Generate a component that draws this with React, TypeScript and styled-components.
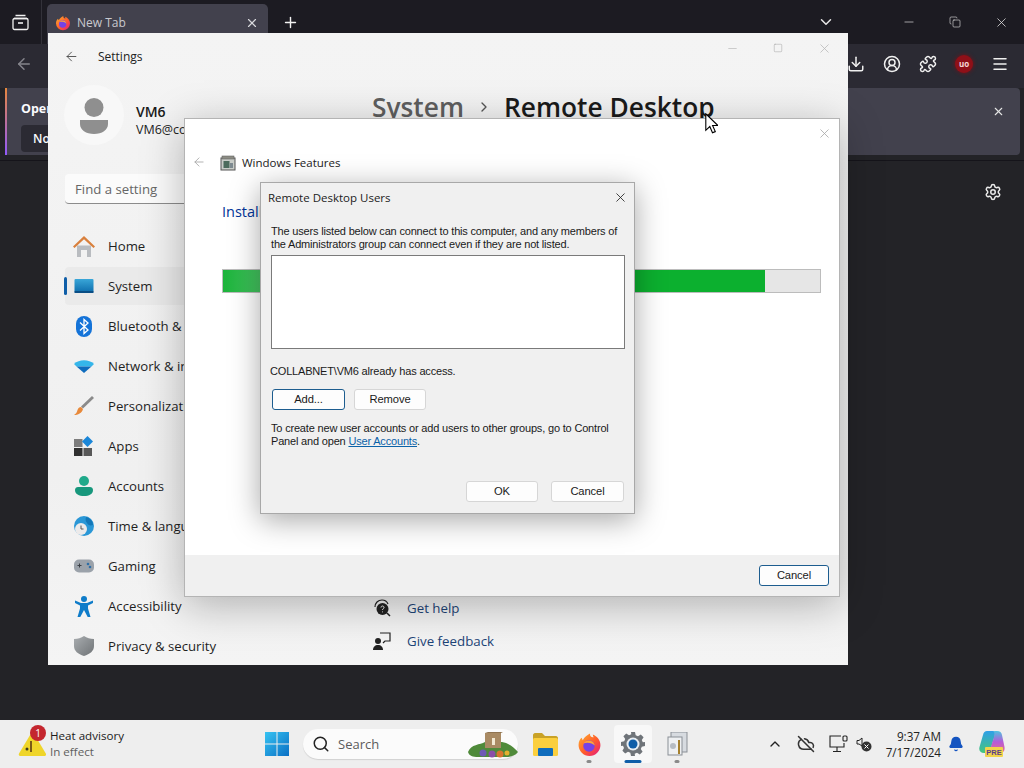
import React from "react";
import styled, { createGlobalStyle } from "styled-components";
import {
	ArrowLeft,
	Bell,
	ChevronDown,
	ChevronRight,
	ChevronUp,
	CircleUserRound,
	CloudOff,
	Copy,
	Download,
	Menu,
	Minus,
	Plus,
	Puzzle,
	Search,
	Settings as Gear,
	Square,
	X,
} from "lucide-react";

const UI_FONT = `"Open Sans", "Noto Sans", sans-serif`;
const DIALOG_FONT = `"Liberation Sans", Arial, sans-serif`;

const GlobalStyle = createGlobalStyle`
	html, body {
		margin: 0;
		padding: 0;
		background: #232327;
	}
	* {
		box-sizing: border-box;
	}
`;

/* small drawn icons */

const FirefoxIcon = ({ size = 16 }: { size?: number }) => (
	<svg width={size} height={size} viewBox="0 0 24 24">
		<defs>
			<linearGradient id="ffx" x1="0" y1="0" x2="1" y2="1">
				<stop offset="0" stopColor="#ffb42e" />
				<stop offset="0.55" stopColor="#ff5a2c" />
				<stop offset="1" stopColor="#e31587" />
			</linearGradient>
		</defs>
		<path d="M12 23a10.5 10.5 0 0 1-10.5-10.5C1.500 9 3 6.500 4.500 5.500l1 2.500C7 5 10 3 12.500 1.500 12 4 14 5.500 16 5c-.5-.8-.8-1.500-.8-2.500 4 1.500 7.300 5.500 7.300 10A10.500 10.500 0 0 1 12 23z" fill="url(#ffx)" />
		<circle cx="11.500" cy="13.500" r="5.500" fill="#7542e5" />
		<path d="M6 11c2-3 6-3.500 8.500-2 1.500 1 2.500 2.500 2.500 4-2-2.500-7-3.500-11-2z" fill="#ffa436" />
	</svg>
);

const TabManagerIcon = () => (
	<svg width="17" height="17" viewBox="0 0 17 17" fill="none" stroke="#f2f2f2" strokeWidth="1.3">
		<path d="M3.500 1.500h10M2 4.500h13" />
		<rect x="1" y="4.500" width="15" height="11" rx="1.500" />
		<path d="M6 9h5" strokeWidth="1.600" />
	</svg>
);

const PersonGlyph = () => (
	<svg width="30" height="36" viewBox="0 0 30 36">
		<circle cx="15" cy="9.500" r="9.500" fill="#8f8f8f" />
		<path d="M1 22h28v4c0 6-6 10-14 10S1 32 1 26z" fill="#8f8f8f" />
	</svg>
);

const HomeIcon = () => (
	<svg width="22" height="21" viewBox="0 0 22 21">
		<path d="M4 9.500h14V21h-4v-7H8v7H4z" fill="#b9bcc0" />
		<path d="M11 0L22 10.500l-1.500 1.500L11 3.200 1.500 12 0 10.500z" fill="#d9803d" />
	</svg>
);

const SystemIcon = () => (
	<svg width="20" height="15" viewBox="0 0 20 15">
		<defs>
			<linearGradient id="sys" x1="0" y1="0" x2="0" y2="1">
				<stop offset="0" stopColor="#39a6d8" />
				<stop offset="1" stopColor="#0f6fae" />
			</linearGradient>
		</defs>
		<rect width="19" height="13" x="0.500" rx="1" fill="url(#sys)" />
		<rect width="19" height="2" x="0.500" y="12" fill="#0a4e85" />
	</svg>
);

const BluetoothIcon = () => (
	<svg width="16" height="21" viewBox="0 0 16 21">
		<rect width="16" height="21" rx="8" fill="#1473d8" />
		<path d="M4 6.500l8 7.500-4 3.500V3.500l4 3.500-8 7.500" fill="none" stroke="#fff" strokeWidth="1.300" />
	</svg>
);

const WifiIcon = () => (
	<svg width="20" height="14" viewBox="0 0 20 14">
		<path d="M0 5C5 0 15 0 20 5l-2.500 2.500h-15z" fill="#35b6ea" />
		<path d="M2.500 7.500h15L10 14z" fill="#0f6cbd" />
	</svg>
);

const BrushIcon = () => (
	<svg width="20" height="20" viewBox="0 0 20 20">
		<path d="M18 0l2 2L9 12.500 7 10.500z" fill="#8a8a8a" />
		<path d="M7 11l2 2c-1 4-5 6-9 6 2-1 3-3 3.500-5 .5-2 2-3 3.500-3z" fill="#e8893a" />
	</svg>
);

const AppsIcon = () => (
	<svg width="20" height="20" viewBox="0 0 20 20">
		<rect y="3" width="8.500" height="8" fill="#7d7d7d" />
		<rect y="12" width="8.500" height="8" fill="#303030" />
		<rect x="9.500" y="12" width="8.500" height="8" fill="#585858" />
		<path d="M13.500 0l5.500 5.500-5.500 5.500L8 5.500z" fill="#1a86d8" />
	</svg>
);

const AccountsIcon = () => (
	<svg width="18" height="20" viewBox="0 0 18 20">
		<circle cx="9" cy="5" r="5" fill="#1fa98a" />
		<path d="M0 14c0-2 1.500-3 3-3h12c1.500 0 3 1 3 3 0 4-4 6-9 6s-9-2-9-6z" fill="#17977c" />
	</svg>
);

const TimeIcon = () => (
	<svg width="20" height="20" viewBox="0 0 20 20">
		<circle cx="10" cy="10" r="10" fill="#2a97d6" />
		<path d="M12 1c4 1 7 4 7 8-3 1-5 0-6-2-1-1-2-3-1-6z" fill="#1478b8" />
		<circle cx="7" cy="13" r="6" fill="#eceaea" />
		<path d="M7 9.500V13h2.500" stroke="#555" strokeWidth="1" fill="none" />
	</svg>
);

const GamingIcon = () => (
	<svg width="20" height="14" viewBox="0 0 20 14">
		<rect width="20" height="13" y="0.500" rx="5" fill="#9ba2aa" />
		<path d="M3.500 6.500h4M5.500 4.500v4" stroke="#3a3f45" strokeWidth="1" />
		<circle cx="14" cy="5" r="1.300" fill="#2e6ea6" />
		<circle cx="16" cy="8" r="1.300" fill="#2e6ea6" />
	</svg>
);

const AccessibilityIcon = () => (
	<svg width="18" height="21" viewBox="0 0 18 21">
		<circle cx="9" cy="3" r="3" fill="#0f7cc9" />
		<path d="M0 4.500l6 2.500h6l6-2.500.8 2L13 9.500v3L15.500 21h-2.800L9 14l-3.700 7H2.500L5 12.500v-3L-.8 6.500z" fill="#0f7cc9" />
	</svg>
);

const ShieldIcon = () => (
	<svg width="20" height="20" viewBox="0 0 20 20">
		<defs>
			<linearGradient id="shd" x1="0" y1="0" x2="1" y2="1">
				<stop offset="0" stopColor="#a9adb0" />
				<stop offset="1" stopColor="#6f7376" />
			</linearGradient>
		</defs>
		<path d="M10 0c3 2 6 3 10 3v7c0 5-4 8-10 10C4 18 0 15 0 10V3c4 0 7-1 10-3z" fill="url(#shd)" />
	</svg>
);

const HelpIcon = () => (
	<svg width="18" height="18" viewBox="0 0 18 18">
		<path d="M2 8C2 4 5 1 9 1c3 0 5 1.500 6 4" fill="none" stroke="#222" strokeWidth="1.200" />
		<circle cx="9.500" cy="10" r="6" fill="#222" />
		<path d="M14 14l3 3" stroke="#222" strokeWidth="1.500" />
		<path d="M8 8.500c0-2 3-2 3 0 0 1.200-1.500 1-1.500 2.500M9.500 12.500v.8" stroke="#fff" strokeWidth="1" fill="none" />
	</svg>
);

const FeedbackIcon = () => (
	<svg width="18" height="18" viewBox="0 0 18 18">
		<circle cx="5" cy="9" r="3" fill="#222" />
		<path d="M0 18c0-3 2-5 5-5s5 2 5 5z" fill="#222" />
		<path d="M7 1h10v8h-5l-2 2" fill="none" stroke="#222" strokeWidth="1.200" />
	</svg>
);

const FeaturesIcon = () => (
	<svg width="16" height="16" viewBox="0 0 16 16">
		<rect x="1" y="3" width="14" height="12" fill="#c9cdc8" stroke="#555" />
		<rect x="2" y="1" width="12" height="3" fill="#8c8c84" stroke="#666" strokeWidth="0.600" />
		<rect x="3.500" y="6" width="6" height="7" fill="#4c6b5c" />
		<rect x="10" y="8" width="3" height="5" fill="#7d8a90" />
	</svg>
);

const ArrowCursor = () => (
	<svg width="13" height="21" viewBox="0 0 13 21">
		<path d="M.8.800v16.500l4-3.800 2.700 6.300 2.800-1.200-2.700-6.100h5.300z" fill="#fff" stroke="#000" strokeWidth="1.100" />
	</svg>
);

const WeatherAlert = () => (
	<svg width="28" height="24" viewBox="0 0 28 24">
		<path d="M13 1.500c.8-1.200 2-1.200 2.800 0l12 20c.6 1.200 0 2.500-1.500 2.500H2.500C1 24 .4 22.700 1 21.500z" fill="#efd52a" />
		<rect x="12" y="9" width="2" height="11" fill="#7a5a18" />
		<circle cx="9" cy="17" r="1.500" fill="#3a3a20" />
	</svg>
);

const WindowsLogo = () => (
	<svg width="24" height="24" viewBox="0 0 24 24">
		<defs>
			<linearGradient id="win" x1="0" y1="0" x2="1" y2="1">
				<stop offset="0" stopColor="#36c3f2" />
				<stop offset="1" stopColor="#0a6fc4" />
			</linearGradient>
		</defs>
		<path d="M0 0h11.500v11.500H0zM12.500 0H24v11.500H12.500zM0 12.500h11.500V24H0zM12.500 12.500H24V24H12.500z" fill="url(#win)" />
	</svg>
);

const SearchArt = () => (
	<svg width="50" height="26" viewBox="0 0 50 26">
		<path d="M0 20C3 12 12 13 17 10h17c6 1 12 5 16 10-3 4-8 5-12 5H10C5 25 1 24 0 20z" fill="#4f8a3a" />
		<rect x="17" y="1" width="16" height="15" fill="#a98a63" />
		<path d="M17 1l3-1h15l-2 1z" fill="#8f7350" />
		<rect x="24" y="6" width="3" height="7" fill="#f2e8d2" />
		<circle cx="15" cy="21" r="3.500" fill="#6f5bb5" />
		<circle cx="24" cy="22" r="3.500" fill="#8a4fa8" />
		<circle cx="32" cy="22" r="3.500" fill="#d8752f" />
		<circle cx="39" cy="21" r="2.500" fill="#e4b12f" />
	</svg>
);

const FolderIcon = () => (
	<svg width="25" height="23" viewBox="0 0 25 23">
		<path d="M0 2c0-1 1-2 2-2h7l3 3h11c1 0 2 1 2 2v2H0z" fill="#c9a227" />
		<rect y="5" width="25" height="18" rx="1.500" fill="#fbcf3e" />
		<rect x="5" y="15" width="15" height="8" rx="1" fill="#0f6cbd" />
	</svg>
);

const SettingsGear = () => (
	<svg width="24" height="24" viewBox="0 0 24 24">
		<path d="M10 0h4l.7 3.200 2.300 1 2.800-1.800 2.800 2.800-1.800 2.800 1 2.300L24 10v4l-3.200.7-1 2.300 1.800 2.800-2.800 2.800-2.800-1.800-2.300 1L14 24h-4l-.7-3.200-2.300-1-2.800 1.800-2.800-2.800L3 16l-1-2.300L0 14v-4l3.200-.7 1-2.300L2.400 4.200l2.800-2.800L8 3.200l2.300-1z" fill="#6f7479" />
		<circle cx="12" cy="12" r="6.500" fill="#e8eef3" />
		<circle cx="12" cy="12" r="4.500" fill="#0f5ea8" />
	</svg>
);

const ClipboardApp = () => (
	<svg width="22" height="24" viewBox="0 0 22 24">
		<rect x="5" y="0" width="16" height="20" fill="#d7dbe0" stroke="#8a8f96" />
		<rect x="2" y="5" width="14" height="18" fill="#eef0f2" stroke="#8a8f96" />
		<rect x="12" y="8" width="2" height="14" fill="#a5802d" />
		<circle cx="7" cy="14" r="3" fill="#b6bcc3" />
	</svg>
);

const TrayMonitor = () => (
	<svg width="19" height="18" viewBox="0 0 19 18" fill="none" stroke="#222" strokeWidth="1.100">
		<path d="M12 1H1v11h14V8M8 12v4M4 16.500h8" />
		<rect x="14" y="1" width="4" height="5" rx="1" />
	</svg>
);

const TraySpeaker = () => (
	<svg width="16" height="16" viewBox="0 0 16 16">
		<path d="M1 4.500h2L6 2v8L3 8H1z" fill="none" stroke="#222" strokeWidth="1" />
		<circle cx="10.500" cy="10.500" r="5" fill="#333" />
		<path d="M8.500 8.500l4 4M12.500 8.500l-4 4" stroke="#fff" strokeWidth="1" />
	</svg>
);

const CopilotIcon = () => (
	<svg width="26" height="28" viewBox="0 0 26 28">
		<defs>
			<linearGradient id="copa" x1="0" y1="0" x2="0" y2="1">
				<stop offset="0" stopColor="#2f9fe8" />
				<stop offset="1" stopColor="#46c67c" />
			</linearGradient>
			<linearGradient id="copb" x1="0" y1="0" x2="0" y2="1">
				<stop offset="0" stopColor="#4fc3e0" />
				<stop offset="0.5" stopColor="#b65ad8" />
				<stop offset="1" stopColor="#e8708a" />
			</linearGradient>
		</defs>
		<path d="M8 1h6c2 0 2.500 2 2 4l-5 16c-.5 1.500-1.500 2-3 2H5c-3.500 0-5.500-2.500-4.500-6L4 5c.5-2.500 2-4 4-4z" fill="url(#copa)" />
		<path d="M15 1h3c3 0 4.500 1.500 5 4l2.500 12c.5 3.500-1 6-4.500 6H12c-1.500 0-1.500-1.500-1-3l4-13c.3-2 .5-4 0-6z" fill="url(#copb)" />
		<rect x="6" y="17" width="18" height="10" rx="1" fill="#f2d44b" />
		<text x="15" y="25" textAnchor="middle" fontSize="7.500" fontWeight="700" fontFamily="Liberation Sans" fill="#5a3d8a">PRE</text>
	</svg>
);

/* data */

const NAV_ITEMS = [
	{ label: "Home", icon: <HomeIcon /> },
	{ label: "System", icon: <SystemIcon />, active: true },
	{ label: "Bluetooth & devices", icon: <BluetoothIcon /> },
	{ label: "Network & internet", icon: <WifiIcon /> },
	{ label: "Personalization", icon: <BrushIcon /> },
	{ label: "Apps", icon: <AppsIcon /> },
	{ label: "Accounts", icon: <AccountsIcon /> },
	{ label: "Time & language", icon: <TimeIcon /> },
	{ label: "Gaming", icon: <GamingIcon /> },
	{ label: "Accessibility", icon: <AccessibilityIcon /> },
	{ label: "Privacy & security", icon: <ShieldIcon /> },
];

const PROGRESS = 90.8;

const App = () => {
	return (
		<Screen>
			<GlobalStyle />
			<Browser>
				<TabStrip>
					<TabManager>
						<TabManagerIcon />
					</TabManager>
					<Tab>
						<FirefoxIcon />
						<TabTitle>New Tab</TabTitle>
						<X size={14} color="#d8d8dc" />
					</Tab>
					<NewTab>
						<Plus size={17} color="#f2f2f2" />
					</NewTab>
					<TabList>
						<ChevronDown size={18} color="#e8e8e8" />
					</TabList>
					<BrowserControls>
						<Minus size={14} color="#d8d8d8" strokeWidth={1.2} />
						<Copy size={12} color="#e8e8e8" strokeWidth={1.2} />
						<X size={15} color="#e8e8e8" strokeWidth={1.2} />
					</BrowserControls>
				</TabStrip>
				<Toolbar>
					<ArrowLeft size={18} color="#85858c" />
					<ToolbarRight>
						<Download size={18} color="#f0f0f0" />
						<CircleUserRound size={18} color="#f0f0f0" />
						<Puzzle size={18} color="#f0f0f0" />
						<UblockBadge>uo</UblockBadge>
						<Menu size={18} color="#f0f0f0" />
					</ToolbarRight>
				</Toolbar>
				<NoticeBar>
					<NoticeBody>
						<NoticeTitle>Open previous windows and tabs?</NoticeTitle>
						<NoticeButton>Not now</NoticeButton>
					</NoticeBody>
					<NoticeClose>
						<X size={13} color="#e6e6e6" />
					</NoticeClose>
				</NoticeBar>
				<PageArea>
					<Gear size={18} color="#eaeaea" />
				</PageArea>
			</Browser>

			<Taskbar>
				<Weather>
					<WeatherGlyph>
						<WeatherAlert />
						<AlertCount>1</AlertCount>
					</WeatherGlyph>
					<WeatherText>
						<WeatherTitle>Heat advisory</WeatherTitle>
						<WeatherSub>In effect</WeatherSub>
					</WeatherText>
				</Weather>
				<TaskCenter>
					<WindowsLogo />
					<SearchBox>
						<Search size={18} color="#222" strokeWidth={2} />
						<SearchLabel>Search</SearchLabel>
						<SearchArtSlot>
							<SearchArt />
						</SearchArtSlot>
					</SearchBox>
					<TaskApp>
						<FolderIcon />
					</TaskApp>
					<TaskApp $state="running">
						<FirefoxIcon size={25} />
					</TaskApp>
					<TaskApp $state="active">
						<SettingsGear />
					</TaskApp>
					<TaskApp $state="running">
						<ClipboardApp />
					</TaskApp>
				</TaskCenter>
				<Tray>
					<ChevronUp size={16} color="#222" />
					<CloudOff size={18} color="#333" />
					<TrayPair>
						<TrayMonitor />
						<TraySpeaker />
					</TrayPair>
					<Clock>
						<span>9:37 AM</span>
						<span>7/17/2024</span>
					</Clock>
					<Bell size={16} color="#1454c0" fill="#1454c0" />
					<CopilotSlot>
						<CopilotIcon />
					</CopilotSlot>
				</Tray>
			</Taskbar>

			<SettingsWindow>
				<SettingsTitle>
					<ArrowLeft size={15} color="#444" strokeWidth={1.4} />
					<SettingsName>Settings</SettingsName>
					<WindowControls>
						<Minus size={13} color="#b5b5b5" strokeWidth={1.2} />
						<Square size={10} color="#a0a0a0" strokeWidth={1.2} />
						<X size={15} color="#b5b5b5" strokeWidth={1.2} />
					</WindowControls>
				</SettingsTitle>
				<SettingsBody>
					<Sidebar>
						<Profile>
							<Avatar>
								<PersonGlyph />
							</Avatar>
							<ProfileText>
								<ProfileName>VM6</ProfileName>
								<ProfileMail>VM6@collabnet.local</ProfileMail>
							</ProfileText>
						</Profile>
						<FindBox>Find a setting</FindBox>
						<Nav>
							{NAV_ITEMS.map((item) => (
								<NavRow key={item.label} $active={item.active}>
									<NavIcon>{item.icon}</NavIcon>
									<NavLabel>{item.label}</NavLabel>
								</NavRow>
							))}
						</Nav>
					</Sidebar>
					<MainPane>
						<Breadcrumb>
							<CrumbParent>System</CrumbParent>
							<ChevronRight size={16} color="#555" strokeWidth={2} />
							<CrumbCurrent>Remote Desktop</CrumbCurrent>
						</Breadcrumb>
						<HelpLinks>
							<HelpRow>
								<HelpGlyph>
									<HelpIcon />
								</HelpGlyph>
								<HelpText>Get help</HelpText>
							</HelpRow>
							<HelpRow>
								<HelpGlyph>
									<FeedbackIcon />
								</HelpGlyph>
								<HelpText>Give feedback</HelpText>
							</HelpRow>
						</HelpLinks>
					</MainPane>
				</SettingsBody>
			</SettingsWindow>

			<FeaturesWindow>
				<FeaturesClose>
					<X size={15} color="#a8a8a8" strokeWidth={1.3} />
				</FeaturesClose>
				<FeaturesContent>
					<FeaturesHeader>
						<ArrowLeft size={14} color="#a8a8a8" strokeWidth={1.5} />
						<FeaturesIconSlot>
							<FeaturesIcon />
						</FeaturesIconSlot>
						<FeaturesTitle>Windows Features</FeaturesTitle>
					</FeaturesHeader>
					<InstallLabel>Installing...</InstallLabel>
					<ProgressTrack>
						<ProgressFill style={{ width: `${PROGRESS}%` }} />
					</ProgressTrack>
				</FeaturesContent>
				<FeaturesFooter>
					<DialogButton $focused $width={70}>
						Cancel
					</DialogButton>
				</FeaturesFooter>
			</FeaturesWindow>

			<UsersDialog>
				<DialogTitleBar>
					<DialogTitle>Remote Desktop Users</DialogTitle>
					<X size={15} color="#1c1c1c" strokeWidth={1.3} />
				</DialogTitleBar>
				<DialogBody>
					<DialogText>
						The users listed below can connect to this computer, and any members of
						<br />
						the Administrators group can connect even if they are not listed.
					</DialogText>
					<UserList />
					<AccessLine>COLLABNET\VM6 already has access.</AccessLine>
					<ButtonRow>
						<DialogButton $focused $width={73}>
							Add...
						</DialogButton>
						<DialogButton $width={72}>Remove</DialogButton>
					</ButtonRow>
					<DialogText>
						To create new user accounts or add users to other groups, go to Control
						<br />
						Panel and open <AccountsLink>User Accounts</AccountsLink>.
					</DialogText>
				</DialogBody>
				<DialogFooter>
					<DialogButton $width={72}>OK</DialogButton>
					<DialogButton $width={73}>Cancel</DialogButton>
				</DialogFooter>
			</UsersDialog>

			<CursorSlot>
				<ArrowCursor />
			</CursorSlot>
		</Screen>
	);
};

const Screen = styled.div`
	position: relative;
	width: 1024px;
	height: 768px;
	overflow: hidden;
	display: flex;
	flex-direction: column;
	font-family: ${UI_FONT};
`;

const Browser = styled.div`
	flex: 1;
	display: flex;
	flex-direction: column;
	background: #232327;
`;

const TabStrip = styled.div`
	height: 44px;
	display: flex;
	align-items: flex-end;
	background: #1c1b22;
`;

const TabManager = styled.div`
	width: 42px;
	height: 44px;
	display: flex;
	align-items: center;
	justify-content: center;
	border-right: 1px solid #33323a;
`;

const Tab = styled.div`
	width: 221px;
	height: 40px;
	margin-left: 5px;
	padding: 0 9px 3px 8px;
	display: flex;
	align-items: center;
	gap: 6px;
	background: #42414d;
	border-radius: 5px 5px 0 0;
`;

const TabTitle = styled.span`
	flex: 1;
	font-size: 12px;
	color: #c9c9cf;
`;

const NewTab = styled.div`
	width: 44px;
	height: 44px;
	display: flex;
	align-items: center;
	justify-content: center;
`;

const TabList = styled.div`
	margin-left: auto;
	height: 44px;
	display: flex;
	align-items: center;
`;

const BrowserControls = styled.div`
	width: 189px;
	height: 44px;
	padding: 0 15px 0 67px;
	display: flex;
	align-items: center;
	justify-content: space-between;
`;

const Toolbar = styled.div`
	height: 44px;
	padding: 0 15px 4px;
	display: flex;
	align-items: center;
	justify-content: space-between;
	background: #2b2a33;
`;

const ToolbarRight = styled.div`
	display: flex;
	align-items: center;
	gap: 18px;
`;

const UblockBadge = styled.div`
	width: 18px;
	height: 18px;
	border-radius: 50%;
	background: #8f1018;
	color: #f4d6d6;
	font-size: 8px;
	font-weight: 700;
	line-height: 17px;
	text-align: center;
	box-shadow: 0 0 4px #7a1016;
`;

const NoticeBar = styled.div`
	height: 67px;
	margin: 0 4px 0 5px;
	padding: 12px 15px 0 14px;
	display: flex;
	justify-content: space-between;
	align-items: flex-start;
	background: #42414d;
	border-radius: 4px;
	border-left: 2px solid;
	border-image: linear-gradient(#e8873a, #9059ff) 1;
`;

const NoticeBody = styled.div`
	display: flex;
	flex-direction: column;
	gap: 8px;
`;

const NoticeTitle = styled.span`
	width: 27px;
	overflow: hidden;
	white-space: nowrap;
	font-size: 12.5px;
	line-height: 17px;
	font-weight: 700;
	color: #fbfbfe;
`;

const NoticeButton = styled.span`
	width: 27px;
	height: 27px;
	padding-left: 12px;
	overflow: hidden;
	white-space: nowrap;
	line-height: 27px;
	font-size: 12px;
	font-weight: 600;
	color: #fbfbfe;
	background: #2b2a33;
	border-radius: 4px 0 0 4px;
`;

const NoticeClose = styled.div`
	margin-top: 1px;
`;

const PageArea = styled.div`
	flex: 1;
	margin-top: 5px;
	padding: 22px 22px 0 0;
	display: flex;
	justify-content: flex-end;
	align-items: flex-start;
	border-top: 1px solid #15141a;
`;

const Taskbar = styled.div`
	height: 48px;
	padding-left: 18px;
	display: flex;
	align-items: center;
	background: #eeeeee;
`;

const Weather = styled.div`
	width: 247px;
	display: flex;
	align-items: center;
	gap: 4px;
`;

const WeatherGlyph = styled.div`
	position: relative;
	width: 28px;
	height: 24px;
`;

const AlertCount = styled.span`
	position: absolute;
	top: -7px;
	left: 12px;
	width: 16px;
	height: 16px;
	border-radius: 50%;
	background: #c4262e;
	color: #fff;
	font-size: 10px;
	line-height: 16px;
	text-align: center;
`;

const WeatherText = styled.div`
	display: flex;
	flex-direction: column;
`;

const WeatherTitle = styled.span`
	font-size: 11.6px;
	line-height: 16px;
	color: #1b1b1b;
`;

const WeatherSub = styled.span`
	font-size: 11.6px;
	line-height: 16px;
	color: #5f5f5f;
`;

const TaskCenter = styled.div`
	display: flex;
	align-items: center;
`;

const SearchBox = styled.div`
	position: relative;
	width: 215px;
	height: 30px;
	margin: 0 8px 0 14px;
	padding-left: 9px;
	display: flex;
	align-items: center;
	gap: 8px;
	background: #fbfbfb;
	border-radius: 15px;
	box-shadow: 0 1px 1px rgba(0, 0, 0, 0.12);
`;

const SearchLabel = styled.span`
	font-size: 13px;
	color: #5c5c5c;
`;

const SearchArtSlot = styled.div`
	position: absolute;
	right: 0;
	top: 3px;
	height: 26px;
`;

const TaskApp = styled.div<{ $state?: "running" | "active" }>`
	position: relative;
	width: 38px;
	height: 38px;
	margin-right: 6px;
	display: flex;
	align-items: center;
	justify-content: center;
	border-radius: 4px;
	background: ${(p) => (p.$state === "active" ? "#f8f8f8" : "transparent")};

	&::after {
		content: "";
		display: ${(p) => (p.$state ? "block" : "none")};
		position: absolute;
		bottom: 0;
		left: 50%;
		transform: translateX(-50%);
		width: ${(p) => (p.$state === "active" ? "17px" : "5px")};
		height: 3px;
		border-radius: 2px;
		background: ${(p) => (p.$state === "active" ? "#0f5ea8" : "#8a8a8a")};
	}
`;

const Tray = styled.div`
	margin-left: auto;
	padding-right: 19px;
	display: flex;
	align-items: center;
	gap: 14px;
`;

const TrayPair = styled.div`
	display: flex;
	align-items: center;
	gap: 8px;
`;

const Clock = styled.div`
	margin-right: -7px;
	display: flex;
	flex-direction: column;
	align-items: flex-end;
	font-size: 11.7px;
	line-height: 16px;
	color: #222;
`;

const CopilotSlot = styled.div`
	margin-left: 1px;
	height: 28px;
`;

const SettingsWindow = styled.div`
	position: absolute;
	left: 48px;
	top: 33px;
	width: 800px;
	height: 632px;
	display: flex;
	flex-direction: column;
	overflow: hidden;
	background: linear-gradient(180deg, #f4f4f4, #f0f0f0 70%, #f4f4f4);
`;

const SettingsTitle = styled.div`
	height: 49px;
	padding: 0 16px;
	display: flex;
	align-items: center;
	gap: 19px;
`;

const SettingsName = styled.span`
	font-size: 12px;
	color: #222;
`;

const WindowControls = styled.div`
	margin: -17px 0 0 auto;
	width: 106px;
	display: flex;
	align-items: center;
	justify-content: space-between;
`;

const SettingsBody = styled.div`
	flex: 1;
	display: flex;
`;

const Sidebar = styled.div`
	width: 308px;
	padding: 5px 0 0 17px;
`;

const Profile = styled.div`
	height: 60px;
	display: flex;
	align-items: center;
	gap: 12px;
`;

const Avatar = styled.div`
	width: 60px;
	height: 60px;
	margin-left: -1px;
	padding-top: 2px;
	display: flex;
	align-items: center;
	justify-content: center;
	border-radius: 50%;
	background: #f8f8f8;
`;

const ProfileText = styled.div`
	padding-top: 11px;
	display: flex;
	flex-direction: column;
`;

const ProfileName = styled.span`
	font-size: 14px;
	line-height: 18px;
	font-weight: 600;
	color: #1a1a1a;
`;

const ProfileMail = styled.span`
	font-size: 12.5px;
	line-height: 17px;
	color: #222;
`;

const FindBox = styled.div`
	height: 30px;
	margin-top: 29px;
	padding-left: 10px;
	line-height: 30px;
	font-size: 13.2px;
	color: #666;
	background: #fbfbfb;
	border-radius: 4px;
	border-bottom: 1px solid #8c8c8c;
`;

const Nav = styled.div`
	margin-top: 23px;
	display: flex;
	flex-direction: column;
	gap: 2px;
`;

const NavRow = styled.div<{ $active?: boolean }>`
	position: relative;
	flex: none;
	height: 38px;
	display: flex;
	align-items: center;
	border-radius: 4px;
	background: ${(p) => (p.$active ? "#eaeaea" : "transparent")};

	&::before {
		content: "";
		display: ${(p) => (p.$active ? "block" : "none")};
		position: absolute;
		left: -1px;
		top: 10px;
		width: 3px;
		height: 18px;
		border-radius: 2px;
		background: #0f5ea8;
	}
`;

const NavIcon = styled.div`
	width: 38px;
	display: flex;
	justify-content: center;
`;

const NavLabel = styled.span`
	margin-left: 5px;
	font-size: 13.2px;
	color: #1f1f1f;
	white-space: nowrap;
`;

const MainPane = styled.div`
	flex: 1;
	padding: 8px 0 8px 16px;
	display: flex;
	flex-direction: column;
	justify-content: space-between;
`;

const Breadcrumb = styled.div`
	display: flex;
	align-items: center;
	gap: 12px;
	line-height: 38px;
	white-space: nowrap;
`;

const CrumbParent = styled.span`
	font-size: 26.3px;
	font-weight: 600;
	color: #5f5f5f;
`;

const CrumbCurrent = styled.span`
	font-size: 26.3px;
	font-weight: 600;
	color: #1b1b1b;
`;

const HelpLinks = styled.div`
	display: flex;
	flex-direction: column;
`;

const HelpRow = styled.div`
	height: 33px;
	display: flex;
	align-items: center;
	gap: 16px;
`;

const HelpGlyph = styled.div`
	width: 18px;
	height: 18px;
	margin-left: 1px;
`;

const HelpText = styled.span`
	font-size: 13.3px;
	color: #1d4477;
`;

const FeaturesWindow = styled.div`
	position: absolute;
	left: 184px;
	top: 118px;
	width: 656px;
	height: 479px;
	display: flex;
	flex-direction: column;
	background: #ffffff;
	border: 1px solid #b4b4b4;
	box-shadow: 0 8px 40px rgba(0, 0, 0, 0.28);
`;

const FeaturesClose = styled.div`
	position: absolute;
	right: 7px;
	top: 5px;
`;

const FeaturesContent = styled.div`
	flex: 1;
	padding: 35px 18px 0 7px;
`;

const FeaturesHeader = styled.div`
	display: flex;
	align-items: center;
	gap: 6px;
	height: 16px;
`;

const FeaturesIconSlot = styled.div`
	height: 16px;
	margin-left: 8px;
`;

const FeaturesTitle = styled.span`
	font-size: 11.5px;
	color: #222;
`;

const InstallLabel = styled.div`
	margin: 32px 0 0 30px;
	font-size: 14.5px;
	line-height: 20px;
	color: #003399;
`;

const ProgressTrack = styled.div`
	margin: 47px 0 0 30px;
	height: 24px;
	background: #e6e6e6;
	border: 1px solid #bcbcbc;
`;

const ProgressFill = styled.div`
	height: 100%;
	background: linear-gradient(90deg, #1bb33a 0, #46c562 7%, #0cb02f 30%);
`;

const FeaturesFooter = styled.div`
	height: 41px;
	padding: 10px 10px 0 0;
	display: flex;
	justify-content: flex-end;
	background: #f0f0f0;
`;

const UsersDialog = styled.div`
	position: absolute;
	left: 260px;
	top: 182px;
	width: 375px;
	height: 332px;
	display: flex;
	flex-direction: column;
	font-family: ${DIALOG_FONT};
	background: #f0f0f0;
	border: 1px solid #a8a8a8;
	box-shadow: 0 6px 28px rgba(0, 0, 0, 0.35);
`;

const DialogTitleBar = styled.div`
	height: 29px;
	padding: 0 6px 0 7px;
	display: flex;
	align-items: center;
	justify-content: space-between;
`;

const DialogTitle = styled.span`
	font-family: ${UI_FONT};
	font-size: 11.5px;
	color: #222;
`;

const DialogBody = styled.div`
	flex: 1;
	padding: 13px 9px 0 10px;
	display: flex;
	flex-direction: column;
`;

const DialogText = styled.div`
	font-size: 11px;
	letter-spacing: -0.18px;
	line-height: 13px;
	color: #1a1a1a;
	white-space: nowrap;
`;

const UserList = styled.div`
	height: 94px;
	margin-top: 4px;
	background: #ffffff;
	border: 1px solid #7a7a7a;
`;

const AccessLine = styled(DialogText)`
	margin: 16px 0 0 -1px;
`;

const ButtonRow = styled.div`
	margin: 11px 0 12px 1px;
	display: flex;
	gap: 9px;
`;

const DialogFooter = styled.div`
	padding: 0 10px 11px 0;
	display: flex;
	justify-content: flex-end;
	gap: 13px;
`;

const DialogButton = styled.div<{ $focused?: boolean; $width: number }>`
	width: ${(p) => p.$width}px;
	height: 21px;
	font-family: ${DIALOG_FONT};
	font-size: 11.2px;
	letter-spacing: -0.1px;
	line-height: 19px;
	text-align: center;
	color: #1a1a1a;
	background: #fdfdfd;
	border-radius: 3px;
	border: 1px solid ${(p) => (p.$focused ? "#1d5d8f" : "#d6d6d6")};
`;

const AccountsLink = styled.span`
	color: #0b62a8;
	text-decoration: underline;
`;

const CursorSlot = styled.div`
	position: absolute;
	left: 705px;
	top: 113px;
	height: 21px;
`;

export default App;
